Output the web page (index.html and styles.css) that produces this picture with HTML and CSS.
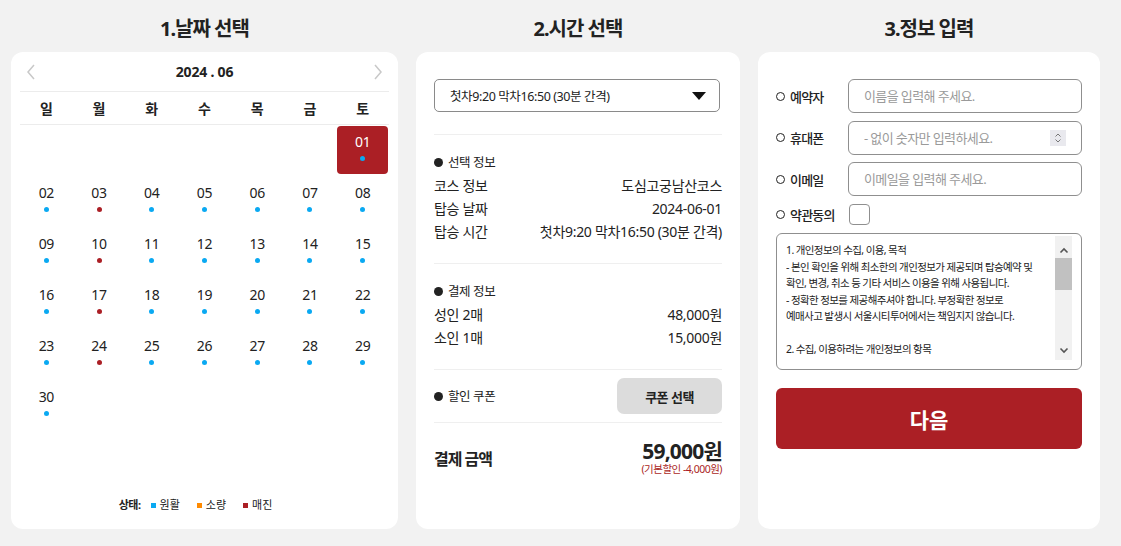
FILE: index.html
```html
<!DOCTYPE html>
<html lang="ko">

<head>
    <meta charset="UTF-8">
    <meta name="viewport" content="width=device-width, initial-scale=1.0">
    <title>예약하기</title>
    <link rel="stylesheet" href="styles.css">
</head>

<body>
    <div class="page">

        <!-- 1. 날짜 선택 -->
        <section class="step step-date">
            <h2 class="step-title">1.날짜 선택</h2>
            <div class="card calendar">
                <div class="cal-head">
                    <span class="cal-nav">
                        <svg width="10" height="16" viewBox="0 0 10 16"><polyline points="8,1 2,8 8,15" fill="none" stroke="#c8c8c8" stroke-width="1.5"/></svg>
                    </span>
                    <span class="cal-month">2024 . 06</span>
                    <span class="cal-nav">
                        <svg width="10" height="16" viewBox="0 0 10 16"><polyline points="2,1 8,8 2,15" fill="none" stroke="#c8c8c8" stroke-width="1.5"/></svg>
                    </span>
                </div>
                <div class="cal-week">
                    <span>일</span><span>월</span><span>화</span><span>수</span><span>목</span><span>금</span><span>토</span>
                </div>
                <div class="cal-days">
                    <div class="day empty"></div>
                    <div class="day empty"></div>
                    <div class="day empty"></div>
                    <div class="day empty"></div>
                    <div class="day empty"></div>
                    <div class="day empty"></div>
                    <div class="day selected"><span class="num">01</span><i class="dot ok"></i></div>

                    <div class="day"><span class="num">02</span><i class="dot ok"></i></div>
                    <div class="day"><span class="num">03</span><i class="dot sold"></i></div>
                    <div class="day"><span class="num">04</span><i class="dot ok"></i></div>
                    <div class="day"><span class="num">05</span><i class="dot ok"></i></div>
                    <div class="day"><span class="num">06</span><i class="dot ok"></i></div>
                    <div class="day"><span class="num">07</span><i class="dot ok"></i></div>
                    <div class="day"><span class="num">08</span><i class="dot ok"></i></div>

                    <div class="day"><span class="num">09</span><i class="dot ok"></i></div>
                    <div class="day"><span class="num">10</span><i class="dot sold"></i></div>
                    <div class="day"><span class="num">11</span><i class="dot ok"></i></div>
                    <div class="day"><span class="num">12</span><i class="dot ok"></i></div>
                    <div class="day"><span class="num">13</span><i class="dot ok"></i></div>
                    <div class="day"><span class="num">14</span><i class="dot ok"></i></div>
                    <div class="day"><span class="num">15</span><i class="dot ok"></i></div>

                    <div class="day"><span class="num">16</span><i class="dot ok"></i></div>
                    <div class="day"><span class="num">17</span><i class="dot sold"></i></div>
                    <div class="day"><span class="num">18</span><i class="dot ok"></i></div>
                    <div class="day"><span class="num">19</span><i class="dot ok"></i></div>
                    <div class="day"><span class="num">20</span><i class="dot ok"></i></div>
                    <div class="day"><span class="num">21</span><i class="dot ok"></i></div>
                    <div class="day"><span class="num">22</span><i class="dot ok"></i></div>

                    <div class="day"><span class="num">23</span><i class="dot ok"></i></div>
                    <div class="day"><span class="num">24</span><i class="dot sold"></i></div>
                    <div class="day"><span class="num">25</span><i class="dot ok"></i></div>
                    <div class="day"><span class="num">26</span><i class="dot ok"></i></div>
                    <div class="day"><span class="num">27</span><i class="dot ok"></i></div>
                    <div class="day"><span class="num">28</span><i class="dot ok"></i></div>
                    <div class="day"><span class="num">29</span><i class="dot ok"></i></div>

                    <div class="day"><span class="num">30</span><i class="dot ok"></i></div>
                </div>
                <div class="legend">
                    <b>상태:</b>
                    <span class="legend-item"><i class="sq ok"></i>원활</span>
                    <span class="legend-item"><i class="sq few"></i>소량</span>
                    <span class="legend-item"><i class="sq sold"></i>매진</span>
                </div>
            </div>
        </section>

        <!-- 2. 시간 선택 -->
        <section class="step step-time">
            <h2 class="step-title">2.시간 선택</h2>
            <div class="card time">
                <div class="select-box">
                    <span>첫차9:20 막차16:50 (30분 간격)</span>
                    <svg width="14" height="8" viewBox="0 0 14 8"><polygon points="0,0 14,0 7,8" fill="#111"/></svg>
                </div>

                <div class="info">
                    <div class="info-title"><i class="bullet"></i>선택 정보</div>
                    <div class="info-row"><span>코스 정보</span><span>도심고궁남산코스</span></div>
                    <div class="info-row"><span>탑승 날짜</span><span>2024-06-01</span></div>
                    <div class="info-row"><span>탑승 시간</span><span>첫차9:20 막차16:50 (30분 간격)</span></div>
                </div>

                <div class="info">
                    <div class="info-title"><i class="bullet"></i>결제 정보</div>
                    <div class="info-row"><span>성인 2매</span><span>48,000원</span></div>
                    <div class="info-row"><span>소인 1매</span><span>15,000원</span></div>
                </div>

                <div class="coupon">
                    <div class="info-title"><i class="bullet"></i>할인 쿠폰</div>
                    <button class="coupon-btn">쿠폰 선택</button>
                </div>

                <div class="total">
                    <span class="total-label">결제 금액</span>
                    <div class="total-price">
                        <div class="price">59,000원</div>
                        <div class="discount">(기본할인 -4,000원)</div>
                    </div>
                </div>
            </div>
        </section>

        <!-- 3. 정보 입력 -->
        <section class="step step-info">
            <h2 class="step-title">3.정보 입력</h2>
            <div class="card form">
                <div class="form-row">
                    <label class="form-label"><i class="ring"></i>예약자</label>
                    <div class="field"><input type="text" placeholder="이름을 입력해 주세요."></div>
                </div>
                <div class="form-row">
                    <label class="form-label"><i class="ring"></i>휴대폰</label>
                    <div class="field">
                        <input type="text" placeholder="- 없이 숫자만 입력하세요.">
                        <span class="spin">
                            <svg width="8" height="12" viewBox="0 0 8 12"><polyline points="1.5,4.5 4,2 6.5,4.5" fill="none" stroke="#777" stroke-width="1"/><polyline points="1.5,7.5 4,10 6.5,7.5" fill="none" stroke="#777" stroke-width="1"/></svg>
                        </span>
                    </div>
                </div>
                <div class="form-row">
                    <label class="form-label"><i class="ring"></i>이메일</label>
                    <div class="field"><input type="text" placeholder="이메일을 입력해 주세요."></div>
                </div>
                <div class="form-row agree-row">
                    <label class="form-label"><i class="ring"></i>약관동의</label>
                    <span class="checkbox"></span>
                </div>

                <div class="terms">
                    <div class="terms-text">
                        <p>1. 개인정보의 수집, 이용, 목적</p>
                        <p>- 본인 확인을 위해 최소한의 개인정보가 제공되며 탑승예약 및</p>
                        <p>확인, 변경, 취소 등 기타 서비스 이용을 위해 사용됩니다.</p>
                        <p>- 정확한 정보를 제공해주셔야 합니다. 부정확한 정보로</p>
                        <p>예매사고 발생시 서울시티투어에서는 책임지지 않습니다.</p>
                        <p>&nbsp;</p>
                        <p>2. 수집, 이용하려는 개인정보의 항목</p>
                    </div>
                    <div class="scrollbar">
                        <svg width="10" height="7" viewBox="0 0 10 7"><polyline points="1.5,5.5 5,2 8.5,5.5" fill="none" stroke="#555" stroke-width="1.6"/></svg>
                        <span class="thumb"></span>
                        <svg class="down" width="10" height="7" viewBox="0 0 10 7"><polyline points="1.5,1.5 5,5 8.5,1.5" fill="none" stroke="#555" stroke-width="1.6"/></svg>
                    </div>
                </div>

                <button class="next-btn">다음</button>
            </div>
        </section>

    </div>
</body>

</html>
```

FILE: styles.css
```css
body {
    margin: 0;
    background-color: #f2f2f2;
    font-family: "Noto Sans", "Noto Sans CJK KR", sans-serif;
    color: #222;
}

.page {
    display: flex;
    gap: 18px;
    padding-left: 11px;
}

.step {
    display: flex;
    flex-direction: column;
}

.step-date { width: 387px; }
.step-time { width: 324px; }
.step-info { width: 342px; }

.step-title {
    margin: 0;
    height: 52px;
    padding-top: 15px;
    box-sizing: border-box;
    font-size: 20px;
    line-height: 28px;
    letter-spacing: -1px;
    text-align: center;
    color: #222;
}

.card {
    background-color: white;
    border-radius: 12px;
    height: 477px;
    box-sizing: border-box;
    display: flex;
    flex-direction: column;
}

/* calendar */
.calendar {
    padding: 0 9px;
}

.cal-head {
    height: 39px;
    display: flex;
    align-items: center;
    justify-content: space-between;
    padding: 0 6px;
    border-bottom: 1px solid #ececec;
}

.cal-nav {
    display: flex;
    width: 10px;
}

.cal-month {
    font-size: 14px;
    font-weight: bold;
    letter-spacing: -0.2px;
}

.cal-week {
    display: grid;
    grid-template-columns: repeat(7, 1fr);
    height: 32px;
    align-items: center;
    text-align: center;
    font-size: 14px;
    font-weight: bold;
    border-bottom: 1px solid #ececec;
}

.cal-days {
    display: grid;
    grid-template-columns: repeat(7, 1fr);
    row-gap: 3px;
    margin-top: 1px;
}

.day {
    height: 48px;
    margin: 0 1px;
    display: flex;
    flex-direction: column;
    align-items: center;
    border-radius: 4px;
}

.day .num {
    margin-top: 7px;
    font-size: 14px;
    line-height: 18px;
    letter-spacing: -0.3px;
    color: #222;
}

.day.selected {
    background-color: #ab1f25;
}

.day.selected .num {
    color: white;
}

.dot {
    width: 5px;
    height: 5px;
    border-radius: 50%;
    margin-top: 5px;
}

.dot.ok { background-color: #0aa9f2; }
.dot.sold { background-color: #ab1f25; }

.legend {
    margin-top: auto;
    padding: 0 18px 16px 0;
    display: flex;
    justify-content: center;
    align-items: center;
    gap: 9px;
    font-size: 11px;
    line-height: 16px;
}

.legend b {
    margin-right: 1px;
    letter-spacing: -0.5px;
}

.legend-item {
    display: flex;
    align-items: center;
    gap: 4px;
    margin-right: 8px;
}

.legend-item:last-child {
    margin-right: 0;
}

.sq {
    width: 5px;
    height: 5px;
}

.sq.ok { background-color: #0aa9f2; }
.sq.few { background-color: #ff8a00; }
.sq.sold { background-color: #ab1f25; }

/* time */
.time {
    padding: 27px 18px 0;
}

.select-box {
    height: 33px;
    box-sizing: border-box;
    margin-right: 2px;
    border: 1px solid #8a8a8a;
    border-radius: 5px;
    display: flex;
    align-items: center;
    justify-content: space-between;
    padding: 0 13px 0 15px;
    font-size: 12.5px;
    letter-spacing: -0.4px;
}

.info {
    margin-top: 22px;
    border-top: 1px solid #efefef;
    padding: 16px 0 20px;
}

.info + .info {
    margin-top: 0;
}

.info-title {
    display: flex;
    align-items: center;
    font-size: 12.5px;
    line-height: 23px;
    letter-spacing: -0.4px;
}

.bullet {
    width: 9px;
    height: 9px;
    border-radius: 50%;
    background-color: #222;
    margin-right: 5px;
}

.info-row {
    display: flex;
    justify-content: space-between;
    font-size: 14px;
    line-height: 23px;
    letter-spacing: -0.3px;
}

.coupon {
    border-top: 1px solid #efefef;
    padding: 8px 0;
    display: flex;
    align-items: center;
    justify-content: space-between;
}

.coupon-btn {
    width: 105px;
    height: 36px;
    border: none;
    border-radius: 7px;
    background-color: #dcdcdc;
    font-family: inherit;
    font-size: 13px;
    font-weight: bold;
    letter-spacing: -0.5px;
    color: #222;
    cursor: pointer;
}

.total {
    border-top: 1px solid #efefef;
    padding-top: 17px;
    display: flex;
    align-items: center;
    justify-content: space-between;
}

.total-label {
    font-size: 16px;
    font-weight: bold;
    letter-spacing: -1px;
}

.total-price {
    text-align: right;
}

.price {
    font-size: 21px;
    font-weight: bold;
    line-height: 22px;
    letter-spacing: -0.8px;
}

.discount {
    font-size: 10.5px;
    line-height: 14px;
    color: #ab1f25;
    letter-spacing: -0.5px;
}

/* form */
.form {
    padding: 27px 18px 0;
}

.form-row {
    display: flex;
    align-items: center;
    margin-bottom: 7.5px;
}

.form-label {
    width: 72px;
    flex-shrink: 0;
    display: flex;
    align-items: center;
    font-size: 13px;
    font-weight: 500;
    letter-spacing: -0.8px;
}

.ring {
    width: 7px;
    height: 7px;
    border: 1.3px solid #222;
    border-radius: 50%;
    margin-right: 5px;
}

.field {
    flex: 1;
    height: 34px;
    box-sizing: border-box;
    border: 1px solid #8f8f8f;
    border-radius: 6px;
    display: flex;
    align-items: center;
    padding: 0 15px;
}

.field input {
    flex: 1;
    min-width: 0;
    border: none;
    outline: none;
    padding: 0;
    font-family: inherit;
    font-size: 13px;
    letter-spacing: -0.6px;
    background: transparent;
}

.field input::placeholder {
    color: #9a9a9a;
}

.spin {
    width: 16px;
    height: 16px;
    background-color: #e9e9ee;
    display: flex;
    align-items: center;
    justify-content: center;
}

.agree-row {
    margin-top: 0.5px;
    margin-bottom: 8px;
}

.checkbox {
    width: 21px;
    height: 21px;
    box-sizing: border-box;
    border: 1px solid #8f8f8f;
    border-radius: 4px;
    margin-left: 1px;
}

.terms {
    height: 137px;
    box-sizing: border-box;
    border: 1px solid #8f8f8f;
    border-radius: 6px;
    padding: 2px 9px 9px 9px;
    display: flex;
    gap: 5px;
}

.terms-text {
    flex: 1;
    overflow: hidden;
    height: 124px;
    padding-top: 6px;
    box-sizing: border-box;
    font-size: 10.5px;
    line-height: 16.5px;
    letter-spacing: -0.6px;
    color: #222;
}

.terms-text p {
    margin: 0;
    white-space: nowrap;
}

.scrollbar {
    width: 17px;
    height: 124px;
    background-color: #f1f1f1;
    display: flex;
    flex-direction: column;
    align-items: center;
    padding-top: 11px;
    box-sizing: border-box;
}

.thumb {
    width: 17px;
    height: 32px;
    margin-top: 4px;
    background-color: #c1c1c1;
}

.scrollbar .down {
    margin-top: auto;
    margin-bottom: 6px;
}

.next-btn {
    margin-top: 18px;
    height: 61px;
    border: none;
    border-radius: 6px;
    background-color: #ab1f25;
    color: white;
    font-family: inherit;
    font-size: 21px;
    font-weight: bold;
    cursor: pointer;
}
```
